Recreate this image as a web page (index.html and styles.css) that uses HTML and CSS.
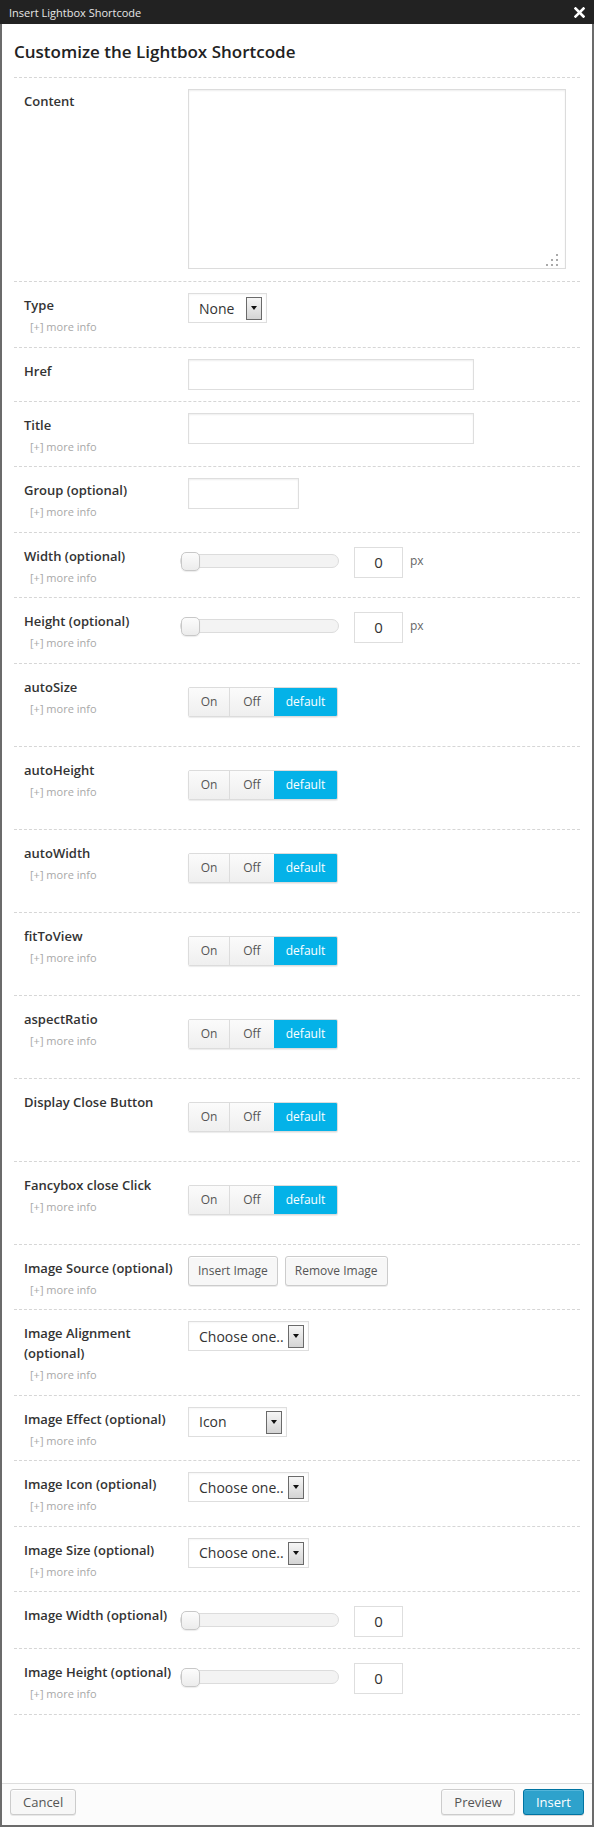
FILE: index.html
```html
<!DOCTYPE html>
<html>
<head>
<meta charset="utf-8">
<title>Insert Lightbox Shortcode</title>
<link rel="stylesheet" href="styles.css">
</head>
<body>
<div class="dialog">
  <div class="titlebar">
    <span class="title">Insert Lightbox Shortcode</span>
    <svg class="close" width="11" height="11" viewBox="0 0 11 11"><path d="M1.5 1.5 L9.5 9.5 M9.5 1.5 L1.5 9.5" stroke="#fff" stroke-width="2.6" stroke-linecap="square"/></svg>
  </div>
  <div class="panel">
    <div class="body">
      <h2 class="heading">Customize the Lightbox Shortcode</h2>

      <div class="row">
        <div class="label-col"><div class="label">Content</div></div>
        <div class="ctl">
          <div class="textarea-wrap">
            <textarea class="textarea"></textarea>
            <svg class="grip" width="14" height="14" viewBox="0 0 14 14">
              <rect x="11" y="1" width="2" height="2" fill="#aaa"/>
              <rect x="6" y="6" width="2" height="2" fill="#aaa"/>
              <rect x="11" y="6" width="2" height="2" fill="#aaa"/>
              <rect x="1" y="11" width="2" height="2" fill="#aaa"/>
              <rect x="6" y="11" width="2" height="2" fill="#aaa"/>
              <rect x="11" y="11" width="2" height="2" fill="#aaa"/>
            </svg>
          </div>
        </div>
      </div>

      <div class="row">
        <div class="label-col"><div class="label">Type</div><div class="more">[+] more info</div></div>
        <div class="ctl"><div class="select w-type"><span>None</span><span class="arrow"></span></div></div>
      </div>

      <div class="row">
        <div class="label-col"><div class="label">Href</div></div>
        <div class="ctl"><div class="input w-long"></div></div>
      </div>

      <div class="row">
        <div class="label-col"><div class="label">Title</div><div class="more">[+] more info</div></div>
        <div class="ctl"><div class="input w-long"></div></div>
      </div>

      <div class="row">
        <div class="label-col"><div class="label">Group (optional)</div><div class="more">[+] more info</div></div>
        <div class="ctl"><div class="input w-short"></div></div>
      </div>

      <div class="row">
        <div class="label-col"><div class="label">Width (optional)</div><div class="more">[+] more info</div></div>
        <div class="ctl">
          <div class="slider-ctl">
            <div class="slider"><span class="handle"></span></div>
            <div class="number">0</div>
            <span class="unit">px</span>
          </div>
        </div>
      </div>

      <div class="row">
        <div class="label-col"><div class="label">Height (optional)</div><div class="more">[+] more info</div></div>
        <div class="ctl">
          <div class="slider-ctl">
            <div class="slider"><span class="handle"></span></div>
            <div class="number">0</div>
            <span class="unit">px</span>
          </div>
        </div>
      </div>

      <div class="row">
        <div class="label-col"><div class="label">autoSize</div><div class="more">[+] more info</div></div>
        <div class="ctl"><div class="toggle"><span class="seg seg-on">On</span><span class="seg seg-off">Off</span><span class="seg seg-def">default</span></div></div>
      </div>

      <div class="row">
        <div class="label-col"><div class="label">autoHeight</div><div class="more">[+] more info</div></div>
        <div class="ctl"><div class="toggle"><span class="seg seg-on">On</span><span class="seg seg-off">Off</span><span class="seg seg-def">default</span></div></div>
      </div>

      <div class="row">
        <div class="label-col"><div class="label">autoWidth</div><div class="more">[+] more info</div></div>
        <div class="ctl"><div class="toggle"><span class="seg seg-on">On</span><span class="seg seg-off">Off</span><span class="seg seg-def">default</span></div></div>
      </div>

      <div class="row">
        <div class="label-col"><div class="label">fitToView</div><div class="more">[+] more info</div></div>
        <div class="ctl"><div class="toggle"><span class="seg seg-on">On</span><span class="seg seg-off">Off</span><span class="seg seg-def">default</span></div></div>
      </div>

      <div class="row">
        <div class="label-col"><div class="label">aspectRatio</div><div class="more">[+] more info</div></div>
        <div class="ctl"><div class="toggle"><span class="seg seg-on">On</span><span class="seg seg-off">Off</span><span class="seg seg-def">default</span></div></div>
      </div>

      <div class="row">
        <div class="label-col"><div class="label">Display Close Button</div></div>
        <div class="ctl"><div class="toggle"><span class="seg seg-on">On</span><span class="seg seg-off">Off</span><span class="seg seg-def">default</span></div></div>
      </div>

      <div class="row">
        <div class="label-col"><div class="label">Fancybox close Click</div><div class="more">[+] more info</div></div>
        <div class="ctl"><div class="toggle"><span class="seg seg-on">On</span><span class="seg seg-off">Off</span><span class="seg seg-def">default</span></div></div>
      </div>

      <div class="row">
        <div class="label-col"><div class="label">Image Source (optional)</div><div class="more">[+] more info</div></div>
        <div class="ctl"><div class="btn-group"><span class="btn btn-img">Insert Image</span><span class="btn btn-img">Remove Image</span></div></div>
      </div>

      <div class="row">
        <div class="label-col"><div class="label">Image Alignment (optional)</div><div class="more">[+] more info</div></div>
        <div class="ctl"><div class="select w-choose"><span>Choose one..</span><span class="arrow"></span></div></div>
      </div>

      <div class="row">
        <div class="label-col"><div class="label">Image Effect (optional)</div><div class="more">[+] more info</div></div>
        <div class="ctl"><div class="select w-effect"><span>Icon</span><span class="arrow"></span></div></div>
      </div>

      <div class="row">
        <div class="label-col"><div class="label">Image Icon (optional)</div><div class="more">[+] more info</div></div>
        <div class="ctl"><div class="select w-choose"><span>Choose one..</span><span class="arrow"></span></div></div>
      </div>

      <div class="row">
        <div class="label-col"><div class="label">Image Size (optional)</div><div class="more">[+] more info</div></div>
        <div class="ctl"><div class="select w-choose"><span>Choose one..</span><span class="arrow"></span></div></div>
      </div>

      <div class="row">
        <div class="label-col"><div class="label">Image Width (optional)</div></div>
        <div class="ctl">
          <div class="slider-ctl">
            <div class="slider"><span class="handle"></span></div>
            <div class="number">0</div>
          </div>
        </div>
      </div>

      <div class="row">
        <div class="label-col"><div class="label">Image Height (optional)</div><div class="more">[+] more info</div></div>
        <div class="ctl">
          <div class="slider-ctl">
            <div class="slider"><span class="handle"></span></div>
            <div class="number">0</div>
          </div>
        </div>
      </div>
    </div>

    <div class="footer">
      <span class="btn btn-foot">Cancel</span>
      <div class="footer-right">
        <span class="btn btn-foot">Preview</span>
        <span class="btn btn-foot btn-primary">Insert</span>
      </div>
    </div>
  </div>
</div>
</body>
</html>
```

FILE: styles.css
```css
* { box-sizing: border-box; }
html, body { margin: 0; padding: 0; background: #fff; }
body { font-family: "Open Sans", "Liberation Sans", sans-serif; color: #333; }

.dialog {
  width: 594px;
  height: 1827px;
  display: flex;
  flex-direction: column;
}

.titlebar {
  height: 24px;
  flex: none;
  background: #222;
  display: flex;
  align-items: center;
  justify-content: space-between;
  padding: 2px 9px 0 9px;
}
.title {
  font-size: 11px;
  line-height: 20px;
  color: #e6e6e6;
}
.close { display: block; margin-top: -1px; }

.panel {
  flex: 1;
  display: flex;
  flex-direction: column;
  border: 2px solid #6b6b6b;
  border-top: none;
}

.body {
  flex: 1;
  padding: 0 12px;
}

.heading {
  margin: 0;
  font-size: 17px;
  font-weight: 600;
  line-height: 24px;
  color: #222;
  padding: 16px 0 13px 0;
  border-bottom: 1px dashed #d6d6d6;
}

.row {
  display: flex;
  align-items: flex-start;
  padding: 11px 0 11px 10px;
  border-bottom: 1px dashed #d6d6d6;
}

.label-col {
  width: 164px;
  flex: none;
  padding-top: 2px;
}
.label {
  font-size: 13px;
  font-weight: 600;
  line-height: 20px;
  color: #333;
  max-width: 158px;
}
.more {
  font-size: 11px;
  line-height: 16.5px;
  color: #a8a8a8;
  margin-top: 4px;
  padding-left: 6px;
}

.ctl { flex: 1; }

/* textarea */
.textarea-wrap {
  position: relative;
  width: 378px;
  height: 180px;
  margin-bottom: 1px;
}
.textarea {
  display: block;
  width: 100%;
  height: 100%;
  resize: none;
  border: 1px solid #dcdcdc;
  box-shadow: inset 0 1px 2px rgba(0,0,0,0.07);
  background: #fff;
  outline: none;
}
.grip {
  position: absolute;
  right: 7px;
  bottom: 2px;
}

/* select */
.select {
  height: 30px;
  border: 1px solid #dedede;
  background: #fff;
  display: flex;
  align-items: center;
  padding-left: 10px;
  padding-right: 4px;
  font-size: 14px;
  color: #333;
  box-shadow: inset 0 1px 2px rgba(0,0,0,0.04);
}
.select .arrow {
  margin-left: auto;
  width: 16px;
  height: 23px;
  border: 1px solid #6a6a6a;
  background: linear-gradient(#f6f6f6, #d4d4d4);
  position: relative;
  margin-top: 1px;
}
.select .arrow::after {
  content: "";
  position: absolute;
  left: 4px;
  top: 8px;
  border-left: 3px solid transparent;
  border-right: 3px solid transparent;
  border-top: 4px solid #111;
}
.w-type { width: 79px; }
.w-effect { width: 99px; }
.w-choose { width: 121px; }

/* input */
.input {
  height: 31px;
  border: 1px solid #dedede;
  background: #fff;
  box-shadow: inset 0 1px 2px rgba(0,0,0,0.07);
}
.w-long { width: 286px; }
.w-short { width: 111px; }

/* slider */
.slider-ctl {
  display: flex;
  align-items: center;
  margin-top: 3px;
  margin-left: -8px;
}
.slider {
  position: relative;
  width: 159px;
  height: 14px;
  border: 1px solid #dcdcdc;
  border-radius: 7px;
  background: #f3f3f3;
  margin-top: -3px;
}
.handle {
  position: absolute;
  left: 0;
  top: -3px;
  width: 19px;
  height: 19px;
  border: 1px solid #c8c8c8;
  border-radius: 5px;
  background: linear-gradient(#fcfcfc, #ececec);
  box-shadow: 0 1px 1px rgba(0,0,0,0.08);
}
.number {
  margin-left: 15px;
  width: 49px;
  height: 31px;
  border: 1px solid #dedede;
  background: #fff;
  font-size: 15px;
  line-height: 29px;
  text-align: center;
  color: #333;
}
.unit {
  margin-left: 7px;
  font-size: 12px;
  color: #666;
  margin-top: -4px;
}

/* toggle */
.toggle {
  display: inline-flex;
  margin-top: 12px;
  margin-bottom: 18px;
  height: 30px;
  border: 1px solid #dcdcdc;
  border-radius: 2px;
  box-shadow: 0 1px 1px rgba(0,0,0,0.08);
  overflow: hidden;
}
.seg {
  display: flex;
  align-items: center;
  justify-content: center;
  font-size: 12px;
  color: #555;
  background: linear-gradient(#fbfbfb, #efefef);
}
.seg-on { width: 41px; border-right: 1px solid #dcdcdc; }
.seg-off { width: 44px; }
.seg-def { width: 63px; background: #04b2e8; color: #fff; }

/* buttons */
.btn-group { display: flex; gap: 7px; }
.btn {
  display: inline-flex;
  align-items: center;
  justify-content: center;
  border: 1px solid #cccccc;
  border-radius: 3px;
  background: #f7f7f7;
  box-shadow: inset 0 1px 0 #fff, 0 1px 0 rgba(0,0,0,0.08);
  color: #555;
  white-space: nowrap;
}
.btn-img {
  height: 30px;
  padding: 0 9px;
  font-size: 12px;
}

.footer {
  height: 42px;
  flex: none;
  border-top: 1px solid #dddddd;
  background: #fcfcfc;
  display: flex;
  justify-content: space-between;
  align-items: flex-start;
  padding: 5px 8px 0 8px;
}
.footer-right { display: flex; gap: 8px; }
.btn-foot {
  height: 26px;
  padding: 0 12px;
  font-size: 13px;
}
.btn-primary {
  background: #2ea2cc;
  border-color: #0074a2;
  color: #fff;
  box-shadow: inset 0 1px 0 rgba(120,200,230,0.5), 0 1px 0 rgba(0,0,0,0.15);
}
```
